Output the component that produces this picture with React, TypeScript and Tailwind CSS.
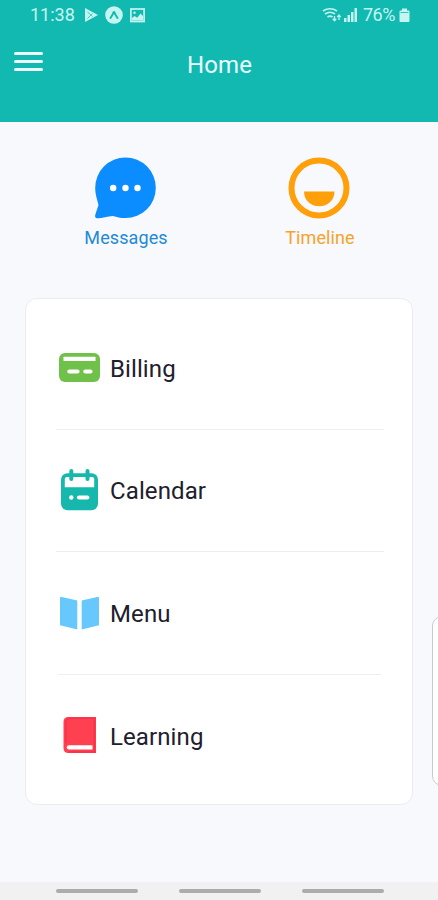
import React from 'react';

interface MenuItem {
  label: string;
  icon: React.ReactNode;
  divider: string;
}

const MessagesIcon = () => (
  <svg className="w-[62px] h-[62px]" viewBox="0 0 62 62">
    <path d="M31.500 0.500A30.300 30.300 0 1 1 31.500 61.100C26 61.100 23 60 19 59C13 59.200 8 61.500 3 61.300C0.800 61 0.900 59 1.500 57L4.500 48C3.500 43 1.200 38 1.200 30.800A30.300 30.300 0 0 1 31.500 0.500Z" fill="#0b8cff" />
    <circle cx="19.200" cy="31" r="3.200" fill="#fff" />
    <circle cx="31.500" cy="31" r="3.200" fill="#fff" />
    <circle cx="43.500" cy="31" r="3.200" fill="#fff" />
  </svg>
);

const TimelineIcon = () => (
  <svg className="w-[62px] h-[62px]" viewBox="0 0 62 62">
    <circle cx="31" cy="31" r="27.500" fill="none" stroke="#ff9f0a" strokeWidth="6" />
    <path d="M16 34.500H46.500C46.500 43 40 49.300 31.200 49.300S16 43 16 34.500Z" fill="#ff9f0a" />
  </svg>
);

const BillingIcon = () => (
  <svg className="w-[42px] h-[42px]" viewBox="0 0 42 42">
    <rect x="1" y="6" width="41" height="29" rx="6" fill="#70c14a" />
    <path d="M5.500 10.300Q5.500 9.800 6.500 9.800H36.500Q37.500 9.800 37.500 10.300V14H5.500Z" fill="#fff" />
    <path d="M11.300 24.500H19.500M27.300 24.500H32.500" stroke="#fff" strokeWidth="4.200" strokeLinecap="round" />
  </svg>
);

const CalendarIcon = () => (
  <svg className="w-[42px] h-[42px]" viewBox="0 0.800 42 42">
    <rect x="3" y="5" width="37" height="37" rx="6.500" fill="#16b8ad" />
    <path d="M6.800 11Q6.800 8.800 9 8.800H34Q36.200 8.800 36.200 11V19H6.800Z" fill="#fff" />
    <path d="M13.300 2.800V10.800M29.500 2.800V10.800" stroke="#16b8ad" strokeWidth="4" strokeLinecap="round" />
    <circle cx="13.300" cy="29.300" r="2.200" fill="#fff" />
    <path d="M21 29.300H29.300" stroke="#fff" strokeWidth="4.200" strokeLinecap="round" />
  </svg>
);

const BookOpenIcon = () => (
  <svg className="w-[42px] h-[42px]" viewBox="0 0 42 42">
    <path d="M2 6.200Q2 4.500 3.800 4.900L19.300 8.500V37.500L2 33.300ZM23.700 8.500L39.200 4.900Q41 4.500 41 6.200V33.300L23.700 37.500Z" fill="#67c8fd" />
  </svg>
);

const BookIcon = () => (
  <svg className="w-[42px] h-[42px]" viewBox="0 0 42 42">
    <path d="M10.500 2H38V38H10.500Q5.500 38 5.500 33V7Q5.500 2 10.500 2Z" fill="#ff4050" />
    <path d="M11 30.200H34.500V34.500H11Q8.800 34.500 8.800 32.300Q8.800 30.200 11 30.200Z" fill="#fff" />
    <path d="M8 28V7.500Q8 4 11.500 3.200H36.500V37H11" fill="none" stroke="#f31f43" strokeWidth="1.500" opacity="0.450" />
  </svg>
);

const items: MenuItem[] = [
  { label: 'Billing', icon: <BillingIcon />, divider: 'mx-0' },
  { label: 'Calendar', icon: <CalendarIcon />, divider: 'mx-0' },
  { label: 'Menu', icon: <BookOpenIcon />, divider: 'ml-0.5 mr-[3px]' },
  { label: 'Learning', icon: <BookIcon />, divider: 'hidden' },
];

const StatusBar = () => (
  <div className="flex h-[30px] items-center pl-[30px] pr-[28px] text-[18px] leading-none text-[#c5f5f1]">
    <span className="w-[45px]">11:38</span>
    <div className="ml-[9px] flex items-center">
      <svg className="h-[18px] w-[15px]" viewBox="0 0 15 18">
        <path d="M1 2L14 9L1 16Z" fill="currentColor" />
        <path d="M3.500 6L8.500 10.500M3.500 12.500L8.500 7.500" stroke="#12b9b1" strokeWidth="1" opacity="0.700" />
      </svg>
      <svg className="ml-[6px] h-[18px] w-[18px]" viewBox="0 0 18 18">
        <circle cx="9" cy="9" r="8.800" fill="currentColor" />
        <path d="M5.500 12Q8 8.500 8.500 6.500Q9 5.500 9.500 6.500Q10 8.500 12.500 12" fill="none" stroke="#12b9b1" strokeWidth="1.900" strokeLinecap="round" />
      </svg>
      <svg className="ml-[7px] h-[15px] w-[15px]" viewBox="0 0 15 15">
        <rect x="0.900" y="1" width="13.200" height="12.500" fill="none" stroke="currentColor" strokeWidth="1.700" />
        <path d="M2 10L4.500 8L7.300 9.700L10.500 5.500L13 8V12.500H2Z" fill="currentColor" />
        <circle cx="4.500" cy="4.700" r="1.200" fill="currentColor" />
      </svg>
    </div>
    <div className="ml-auto flex items-center">
      <svg className="h-[16px] w-[20px]" viewBox="0 0 20 16" fill="none" stroke="currentColor">
        <path d="M1 4Q8 -0.500 15 4M3 7Q8 3.500 13 7M5.500 10Q8 8.200 10.500 10" strokeWidth="1.700" />
        <path d="M12.500 13.500V9M10.800 11.800L12.500 13.700L14.200 11.800M17 13V8M15.300 10L17 8L18.700 10" strokeWidth="1.300" />
      </svg>
      <svg className="ml-[2px] h-[14px] w-[13px]" viewBox="0 0 13 14" fill="currentColor">
        <path d="M0 10H2.500V14H0ZM3.500 7H6V14H3.500ZM7 4H9.500V14H7ZM10.500 0H13V14H10.500Z" />
      </svg>
      <span className="ml-[6px] w-[34px] whitespace-nowrap tracking-[-0.5px]">76%</span>
      <svg className="ml-[2px] h-[15px] w-[11px]" viewBox="0 0 11 15" fill="currentColor">
        <path d="M3 0.500H8V2.500H9.500Q10.500 2.500 10.500 3.500V13Q10.500 14 9.500 14H1.500Q0.500 14 0.500 13V3.500Q0.500 2.500 1.500 2.500H3Z" />
        <path d="M1.500 4.500H9.500" stroke="#12b9b1" strokeWidth="0.800" />
      </svg>
    </div>
  </div>
);

const Header = () => (
  <header className="h-[122px] bg-[#12b9b1]">
    <StatusBar />
    <div className="grid grid-cols-[1fr_auto_1fr] items-start px-3.5">
      <button className="mt-[22px] flex w-[29px] flex-col gap-[5px]" aria-label="Open menu">
        <span className="h-[3px] w-full rounded-full bg-[#ecfffd]"></span>
        <span className="h-[3px] w-full rounded-full bg-[#ecfffd]"></span>
        <span className="h-[3px] w-full rounded-full bg-[#ecfffd]"></span>
      </button>
      <h1 className="mt-[19px] pl-px text-[24px] leading-8 tracking-[0.1px] text-[#e9fffd]">Home</h1>
    </div>
  </header>
);

export default function App() {
  return (
    <div className="relative flex h-[900px] w-[438px] flex-col overflow-hidden bg-[#f8f9fd] font-['Roboto',sans-serif]">
      <Header />

      {/* Shortcuts */}
      <div className="flex justify-between pl-7 pr-6 pt-[35px]">
        <div className="flex w-[194px] flex-col items-center">
          <MessagesIcon />
          <span className="mt-[7px] pl-[2px] text-[18px] leading-6 tracking-[0.1px] text-[#2389d7]">Messages</span>
        </div>
        <div className="flex w-[190px] flex-col items-center">
          <TimelineIcon />
          <span className="mt-[7px] pl-[2px] text-[18px] leading-6 tracking-[0.1px] text-[#f7a229]">Timeline</span>
        </div>
      </div>

      {/* Menu card */}
      <div className="mx-[25px] mt-[48px] h-[507px] rounded-xl border border-[#ebecef] bg-white pl-[30px] pr-[28px] pt-2">
        {items.map((item) => (
          <div key={item.label} className="flex h-[122.600px] flex-col">
            <div className="flex flex-1 items-center gap-[10px] pl-[2px]">
              {item.icon}
              <span className="pt-[2px] text-[24px] leading-8 tracking-[0.1px] text-[#20202c]">{item.label}</span>
            </div>
            <div className={`h-px bg-[#eeeeef] ${item.divider}`}></div>
          </div>
        ))}
      </div>

      {/* Edge panel handle */}
      <div className="absolute left-[432px] top-[616px] h-[170px] w-5 rounded-[10px] border border-[#c9cace] bg-white"></div>

      {/* Navigation bar */}
      <div className="mt-auto flex h-[18px] justify-center gap-[41px] bg-[#f1f1f1] pl-px pt-[7px]">
        <span className="h-1 w-[82px] rounded-full bg-[#acacac]"></span>
        <span className="h-1 w-[82px] rounded-full bg-[#acacac]"></span>
        <span className="h-1 w-[82px] rounded-full bg-[#acacac]"></span>
      </div>
    </div>
  );
}
